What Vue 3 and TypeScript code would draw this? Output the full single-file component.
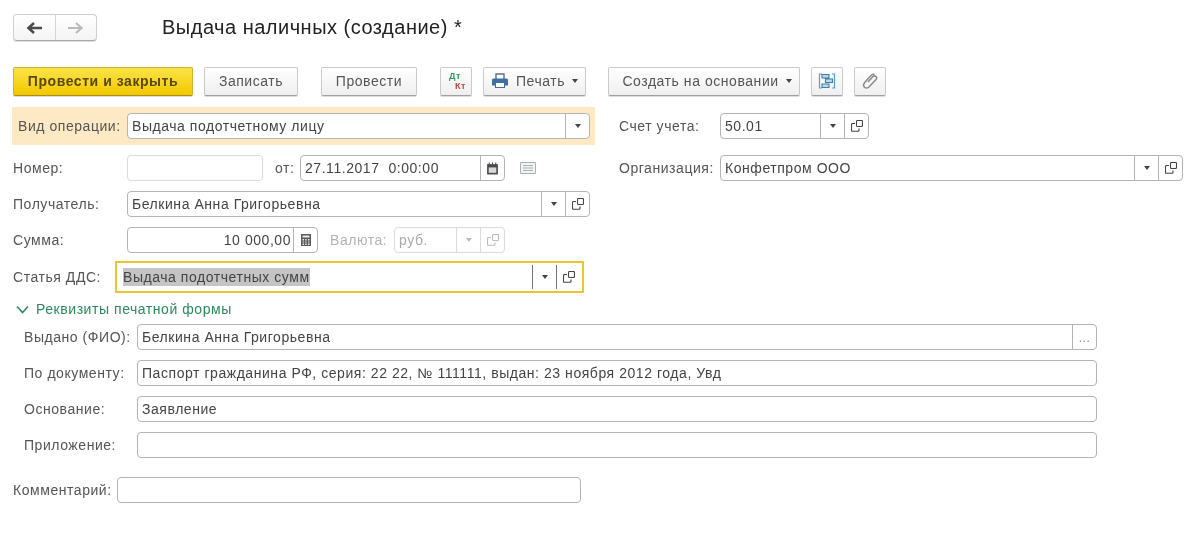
<script setup lang="ts">
interface Line { label: string; value: string; more?: boolean }
const lines: Line[] = [
  { label: 'Выдано (ФИО):', value: 'Белкина Анна Григорьевна', more: true },
  { label: 'По документу:', value: 'Паспорт гражданина РФ, серия: 22 22, № 111111, выдан: 23 ноября 2012 года, Увд' },
  { label: 'Основание:', value: 'Заявление' },
  { label: 'Приложение:', value: '' },
]
</script>

<template>
  <div class="page">
    <svg width="0" height="0" class="defs">
      <symbol id="open" viewBox="0 0 12 12">
        <path d="M5.500 1.500q0-1 1-1h4q1 0 1 1v4q0 1-1 1h-4q-1 0-1-1z M4 3.500H1.500q-1 0-1 1v6q0 .8 1 .8h5.500q1 0 1-1V8.500" fill="none" stroke="currentColor" stroke-width="1.100" />
      </symbol>
    </svg>

    <header class="head">
      <div class="nav">
        <button class="nav-btn">
          <svg width="18" height="14" viewBox="0 0 18 14"><path d="M17 7H4M9 2L3.500 7 9 12" fill="none" stroke="#4a4a4a" stroke-width="2.600" /></svg>
        </button>
        <button class="nav-btn">
          <svg width="18" height="14" viewBox="0 0 18 14"><path d="M1 7h13M9 2l5.500 5L9 12" fill="none" stroke="#b9b9b9" stroke-width="2.200" /></svg>
        </button>
      </div>
      <h1 class="title">Выдача наличных (создание) *</h1>
    </header>

    <div class="toolbar">
      <button class="tb primary w180">Провести и закрыть</button>
      <button class="tb w94 ml11">Записать</button>
      <button class="tb w96 ml23">Провести</button>
      <button class="tb w32 ml23">
        <svg width="26" height="26" viewBox="0 0 26 26">
          <text x="6" y="11" class="dt">Дт</text>
          <text x="12" y="21" class="kt">Кт</text>
        </svg>
      </button>
      <button class="tb w103 ml11">
        <svg width="18" height="16" viewBox="0 0 18 16" class="print">
          <path d="M5 6V1h8v5" fill="#fff" stroke="#5d6f82" stroke-width="1.400" />
          <path d="M1 7q0-1.500 1.500-1.500h13Q17 5.500 17 7v5.500h-3V15H4v-2.500H1z" fill="#3f6f9f" />
          <path d="M5 10h8v4H5z" fill="#fff" />
        </svg>
        Печать<i class="tri gap"></i>
      </button>
      <button class="tb w192 ml22">Создать на основании<i class="tri gap"></i></button>
      <button class="tb w32 ml11">
        <svg width="18" height="18" viewBox="0 0 18 18">
          <path d="M4 2H1.500v14H4M14 2h2.500v14H14" fill="none" stroke="#5b9cc9" stroke-width="1.200" />
          <path d="M4 2.500h7V6H4zM7.500 7h7v3.500h-7zM4 12h7v3.500H4z" fill="#bcd8ec" stroke="#3c7fb0" stroke-width="1.100" />
        </svg>
      </button>
      <button class="tb w32 ml11">
        <svg width="18" height="18" viewBox="0 0 18 18">
          <path d="M7 10l5-5.500q1.500-1.500 3 0t0 3L8 15q-2.500 2-4.500.2t.2-4.700L10 3.500q2-1.800 3.500-1" fill="none" stroke="#8a8a8a" stroke-width="1.500" />
        </svg>
      </button>
    </div>

    <div class="top">
      <div class="left">
        <div class="hl">
          <label class="lab hl-lab">Вид операции:</label>
          <div class="field w463">
            <span class="val">Выдача подотчетному лицу</span>
            <span class="fb"><i class="tri"></i></span>
          </div>
        </div>

        <div class="row mt10">
          <label class="lab w114">Номер:</label>
          <div class="field off w136"></div>
          <label class="lab from">от:</label>
          <div class="field w205">
            <span class="val">27.11.2017&nbsp; 0:00:00</span>
            <span class="fb">
              <svg width="13" height="13" viewBox="0 0 12 12">
                <path d="M1 2h10v9.500H1z" fill="#4a4a4a" />
                <path d="M2.500 5h7v5h-7z" fill="#d8d8d8" />
                <path d="M3 .5v2.500M6 .5v2.500M9 .5v2.500" stroke="#4a4a4a" />
              </svg>
            </span>
          </div>
          <svg class="note" width="16" height="12" viewBox="0 0 16 12">
            <path d="M.5.5h15v11H.5z" fill="#f1f4f4" stroke="#a9b2b2" />
            <path d="M3 3.500h10M3 6h10M3 8.500h10" stroke="#a9b2b2" />
          </svg>
        </div>

        <div class="row mt10">
          <label class="lab w114">Получатель:</label>
          <div class="field w463">
            <span class="val">Белкина Анна Григорьевна</span>
            <span class="fb"><i class="tri"></i></span>
            <span class="fb"><svg class="op"><use href="#open" /></svg></span>
          </div>
        </div>

        <div class="row mt10">
          <label class="lab w114">Сумма:</label>
          <div class="field w191">
            <span class="val right">10 000,00</span>
            <span class="fb">
              <svg width="12" height="14" viewBox="0 0 12 13">
                <path d="M1 .5h10v12H1z" fill="#5a5a5a" />
                <path d="M2.500 2h7v2h-7z" fill="#e8e8e8" />
                <path d="M2.500 5.500h1.500v1.500H2.500zM5.200 5.500h1.500v1.500H5.200zM8 5.500h1.500v1.500H8zM2.500 8h1.500v1H2.500zM5.200 8h1.500v1H5.200zM8 8h1.500v1H8zM2.500 10h1.500v1.500H2.500zM5.200 10h1.500v1.500H5.200zM8 10h1.500v1.500H8z" fill="#e8e8e8" />
              </svg>
            </span>
          </div>
          <label class="lab cur">Валюта:</label>
          <div class="field off w111">
            <span class="val mute">руб.</span>
            <span class="fb"><i class="tri pale"></i></span>
            <span class="fb"><svg class="op pale-op"><use href="#open" /></svg></span>
          </div>
        </div>

        <div class="row mt8">
          <label class="lab w102">Статья ДДС:</label>
          <div class="field focus">
            <span class="val"><mark class="sel">Выдача подотчетных сумм</mark></span>
            <span class="fb short"><i class="tri"></i></span>
            <span class="fb short"><svg class="op"><use href="#open" /></svg></span>
          </div>
        </div>
      </div>

      <div class="right-col">
        <div class="row">
          <label class="lab w101">Счет учета:</label>
          <div class="field w149">
            <span class="val">50.01</span>
            <span class="fb"><i class="tri"></i></span>
            <span class="fb"><svg class="op"><use href="#open" /></svg></span>
          </div>
        </div>
        <div class="row mt16">
          <label class="lab w101">Организация:</label>
          <div class="field w463">
            <span class="val">Конфетпром ООО</span>
            <span class="fb"><i class="tri"></i></span>
            <span class="fb"><svg class="op"><use href="#open" /></svg></span>
          </div>
        </div>
      </div>
    </div>

    <div class="group">
      <svg width="13" height="9" viewBox="0 0 13 9"><path d="M1 1.500l5.500 6 5.500-6" fill="none" stroke="#2a8a5e" stroke-width="1.600" /></svg>
      <span>Реквизиты печатной формы</span>
    </div>

    <div class="lines">
      <div v-for="l in lines" :key="l.label" class="row">
        <label class="lab w113">{{ l.label }}</label>
        <div class="field w960">
          <span class="val">{{ l.value }}</span>
          <span v-if="l.more" class="fb dots">...</span>
        </div>
      </div>
    </div>

    <div class="row comment">
      <label class="lab w104">Комментарий:</label>
      <div class="field w464"></div>
    </div>
  </div>
</template>

<style scoped>
.page {
  box-sizing: border-box;
  width: 1200px;
  height: 545px;
  padding: 14px 0 0 13px;
  overflow: hidden;
  background: #fff;
  color: #4a4a4a;
  font: 14px/18px "Liberation Sans", Arial, sans-serif;
  letter-spacing: 0.55px;
  filter: blur(0.45px);
}
.defs { position: absolute; }
.head { display: flex; align-items: center; height: 27px; }
.nav {
  display: flex;
  width: 84px;
  height: 27px;
  box-sizing: border-box;
  border: 1px solid #cfcfcf;
  border-bottom: 1px solid #aaa;
  border-radius: 4px;
  background: linear-gradient(#fff, #f4f4f4);
  box-shadow: 0 1px 0 #ddd;
}
.nav-btn {
  flex: 1;
  display: flex;
  align-items: center;
  justify-content: center;
  padding: 0;
  border: 0;
  background: none;
}
.nav-btn + .nav-btn { border-left: 1px solid #d4d4d4; }
.title {
  margin: 0 0 0 65px;
  font-size: 20px;
  font-weight: 400;
  line-height: 27px;
  letter-spacing: 0.5px;
  color: #222;
}
.toolbar { display: flex; margin-top: 26px; height: 29px; }
.tb {
  box-sizing: border-box;
  display: flex;
  align-items: center;
  justify-content: center;
  height: 29px;
  padding: 0 0 1px;
  border: 1px solid #cacaca;
  border-bottom: 1px solid #a0a0a0;
  border-radius: 2px;
  background: linear-gradient(#fff, #efefef);
  box-shadow: 0 1px 0 #ddd;
  color: #555;
  font: inherit;
  letter-spacing: inherit;
}
.primary {
  border-color: #d0b030;
  border-bottom-color: #a98d14;
  background: linear-gradient(#fbe347, #f2c900);
  color: #5a4a00;
  font-weight: 700;
}
.w180 { width: 180px; }
.w94 { width: 94px; }
.w96 { width: 96px; }
.w32 { width: 32px; }
.w103 { width: 103px; }
.w192 { width: 192px; padding-left: 6px; }
.ml11 { margin-left: 11px; }
.ml22 { margin-left: 22px; }
.ml23 { margin-left: 23px; }
.dt { font: 700 9px "Liberation Sans", sans-serif; fill: #2c9a5e; }
.kt { font: 700 9px "Liberation Sans", sans-serif; fill: #c0453f; }
.print { margin-right: 7px; }
.tri {
  display: inline-block;
  width: 0;
  height: 0;
  border: 3px solid transparent;
  border-top: 4px solid #444;
  border-bottom: 0;
}
.tri.gap { margin-left: 7px; }
.tri.pale { border-top-color: #bbb; }
.top { display: flex; margin-top: 11px; }
.left { width: 583px; margin-left: -1px; padding-left: 1px; box-sizing: border-box; }
.right-col { margin-left: 24px; padding-top: 6px; }
.hl {
  display: flex;
  align-items: center;
  box-sizing: border-box;
  height: 38px;
  margin-left: -1px;
  padding-left: 6px;
  background: #fdeac4;
}
.hl-lab { width: 109px; }
.row { display: flex; align-items: center; }
.note { margin-left: 15px; }
.mt8 { margin-top: 8px; }
.mt10 { margin-top: 10px; }
.mt16 { margin-top: 16px; }
.lab { flex: none; color: #555; white-space: nowrap; }
.w101 { width: 101px; }
.w102 { width: 102px; }
.w104 { width: 104px; }
.w113 { width: 113px; margin-left: 11px; }
.w114 { width: 114px; }
.from { width: 37px; padding-left: 12px; box-sizing: border-box; }
.cur { width: 76px; padding-left: 12px; box-sizing: border-box; color: #b4b4b4; }
.field {
  box-sizing: border-box;
  display: flex;
  flex: none;
  height: 26px;
  border: 1px solid #b4b4b4;
  border-radius: 4px;
  background: #fff;
  line-height: 24px;
}
.field.off { border-color: #dcdcdc; }
.w136 { width: 136px; }
.w149 { width: 149px; }
.w191 { width: 191px; }
.w205 { width: 205px; }
.w111 { width: 111px; }
.w463 { width: 463px; }
.w464 { width: 464px; }
.w960 { width: 960px; }
.val {
  flex: 1;
  min-width: 0;
  padding: 0 4px;
  color: #444;
  white-space: nowrap;
  overflow: hidden;
}
.val.right { text-align: right; padding-right: 2px; }
.val.mute { color: #aaa; }
.fb {
  flex: none;
  display: flex;
  align-items: center;
  justify-content: center;
  width: 24px;
  border-left: 1px solid #b4b4b4;
  box-sizing: border-box;
}
.off .fb { border-left-color: #dcdcdc; }
.op { width: 12px; height: 12px; color: #444; }
.pale-op { color: #bbb; }
.dots { color: #888; font-size: 12px; padding-top: 2px; }
.field.focus {
  width: 469px;
  height: 32px;
  padding: 2px 2px 2px 4px;
  border: 2px solid #ecc42e;
  border-radius: 0;
  line-height: 22px;
}
.focus .fb.short { height: 24px; border-left-color: #777; }
.focus .val { padding: 1px 3px 0 2px; }
.sel { background: #c4c4c4; color: #444; padding: 1px 0; }
.group {
  display: flex;
  align-items: center;
  gap: 7px;
  height: 16px;
  margin: 8px 0 0 3px;
  color: #2a8a5e;
}
.lines { display: flex; flex-direction: column; gap: 10px; margin-top: 7px; }
.comment { margin-top: 19px; }
</style>
